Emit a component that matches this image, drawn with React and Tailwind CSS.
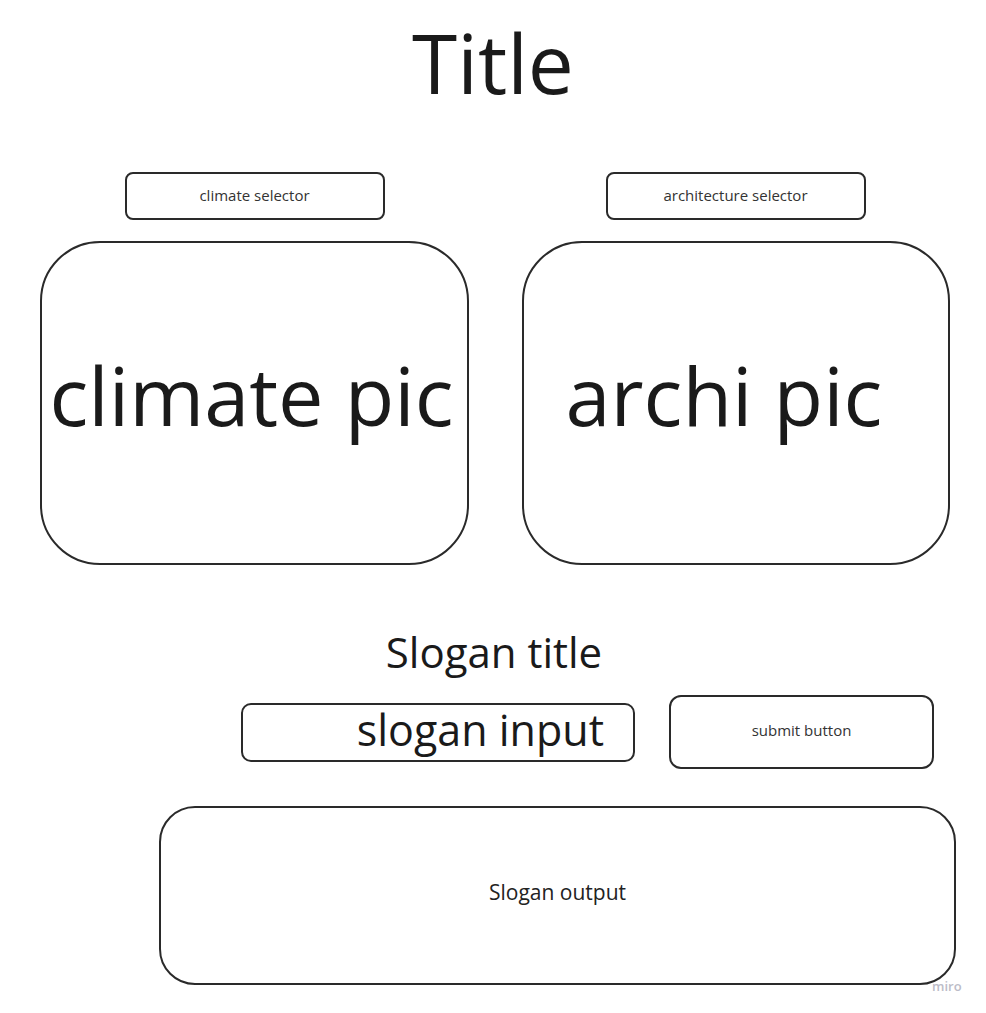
export default function App() {
  return (
    <div
      className="relative w-[986px] h-[1013px] bg-white text-[#1a1a1a] overflow-hidden"
      style={{ fontFamily: '"Open Sans", "Noto Sans", sans-serif' }}
    >
      <div className="flex flex-col">
        <h1 className="h-[172px] pt-[12px] text-center text-[82px] leading-[100px] font-normal">Title</h1>

        <div className="flex pl-[40px] gap-[52px]">
          <div className="w-[429px] flex flex-col items-center">
            <div className="w-[260px] h-[48px] border-2 border-[#2a2a2a] rounded-[8px] flex items-center justify-center text-[15px] text-[#333] pb-[1px]">
              climate selector
            </div>
            <div className="mt-[21px] w-[429px] h-[324px] border-2 border-[#2a2a2a] rounded-[60px] flex items-center justify-center pr-[6px]">
              <span className="text-[81px] leading-none -mt-[18px] whitespace-nowrap">climate pic</span>
            </div>
          </div>
          <div className="w-[429px] flex flex-col items-center">
            <div className="w-[260px] h-[48px] border-2 border-[#2a2a2a] rounded-[8px] flex items-center justify-center text-[15px] text-[#333] pb-[1px]">
              architecture selector
            </div>
            <div className="mt-[21px] w-[428px] h-[324px] border-2 border-[#2a2a2a] rounded-[60px] flex items-center pl-[42px]">
              <span className="text-[81px] leading-none -mt-[18px] whitespace-nowrap">archi pic</span>
            </div>
          </div>
        </div>

        <div className="mt-[62px] h-[50px] flex items-center justify-center pl-[2px] text-[42px] leading-none">
          Slogan title
        </div>

        <div className="mt-[18px] flex items-center">
          <div className="ml-[241px] w-[394px] h-[59px] border-2 border-[#2a2a2a] rounded-[10px] flex items-center justify-end pr-[29px]">
            <span className="text-[43px] leading-none -mt-[6px]">slogan input</span>
          </div>
          <div className="ml-[34px] w-[265px] h-[74px] border-2 border-[#2a2a2a] rounded-[12px] flex items-center justify-center text-[15px] text-[#333] pb-[3px]">
            submit button
          </div>
        </div>

        <div className="mt-[37px] ml-[159px] w-[797px] h-[179px] border-2 border-[#2a2a2a] rounded-[36px] flex items-center justify-center">
          <span className="text-[21px] text-[#222] -mt-[6px]">Slogan output</span>
        </div>
      </div>

      <span className="absolute left-[932px] top-[977px] text-[13px] font-semibold text-[#bcbcc8]">miro</span>
    </div>
  );
}
